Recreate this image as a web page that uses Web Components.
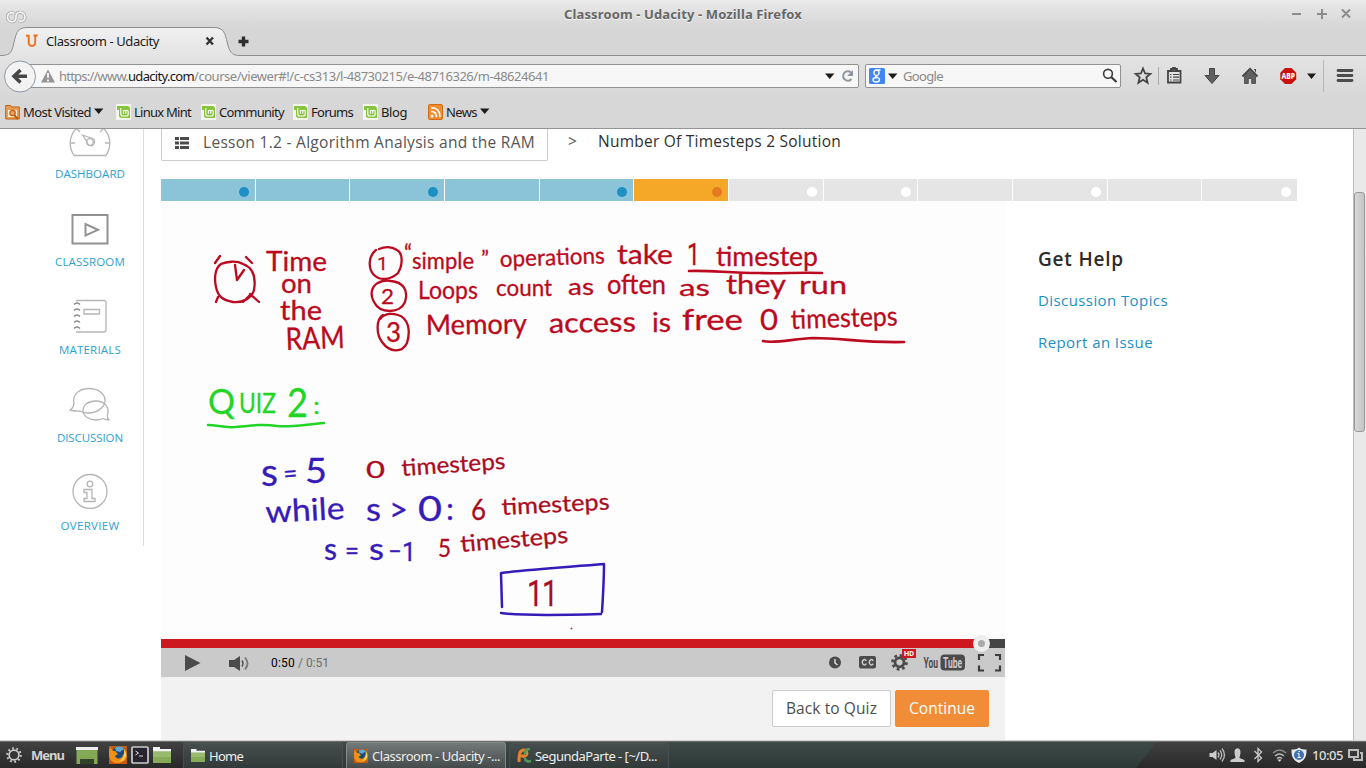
<!DOCTYPE html>
<html lang="en">
<head>
<meta charset="utf-8">
<title>Classroom - Udacity</title>
<style>
html,body{margin:0;height:100%;overflow:hidden}
body{font-family:"Noto Sans","Open Sans",sans-serif;font-size:13px;color:#1b1b1b}
</style>
</head>
<body>
<app-window></app-window>
<script>
const define = (name, css, html, setup) => {
  const t = document.createElement('template');
  t.innerHTML = `<style>*{box-sizing:border-box}${css}</style>${html}`;
  customElements.define(name, class extends HTMLElement {
    connectedCallback() {
      if (this.shadowRoot) return;
      this.attachShadow({mode: 'open'}).append(t.content.cloneNode(true));
      if (setup) setup(this, this.shadowRoot);
    }
  });
};

/* A label whose tracking is adjusted to fill a given width. */
define('fit-text', ':host{display:inline-block;white-space:pre;flex:none}', '<slot></slot>', host => {
  const w = parseFloat(host.getAttribute('w'));
  const n = host.textContent.length;
  const sp = (w - host.getBoundingClientRect().width) / n;
  host.style.letterSpacing = sp.toFixed(3) + 'px';
  host.style.width = w + 'px';
});

const down = '<svg width="10" height="7" viewBox="0 0 10 7"><path d="M0 .5h9.4L4.7 6z" fill="#1c1c1c"/></svg>';

define('window-title', `
:host{display:flex;height:27px;position:relative;justify-content:center;font-weight:700;font-size:13px;line-height:29px;color:#666;text-shadow:0 1px #f4f4f4}
.logo,.ctl{position:absolute;top:0}.logo{left:5px;top:10px}.ctl{right:13px;top:7px}`,
`<svg class="logo" width="22" height="14" viewBox="0 0 22 14" fill="none"><g id="k"><path d="M9 3.500C6 1.500 2.500 3.500 2.500 7s3 5.500 6 4.500S11 8.500 11 7s-.500-3.500 2.500-4.500S20 3.500 20 7s-3.500 5.500-6.500 3.500" stroke="#a2a2a2" stroke-width="3"/><path d="M9 3.500C6 1.500 2.500 3.500 2.500 7s3 5.500 6 4.500S11 8.500 11 7s-.500-3.500 2.500-4.500S20 3.500 20 7s-3.500 5.500-6.500 3.500" stroke="#f4f4f4" stroke-width="1.700"/></g></svg>
<fit-text w="238">Classroom - Udacity - Mozilla Firefox</fit-text>
<svg class="ctl" width="62" height="14" viewBox="0 0 62 14" stroke="#8c8c8c" stroke-width="2"><path d="M1 7h9M26 7h10M31 2v10M51 2.500l8 8M59 2.500l-8 8"/></svg>`);

define('browser-tabs', `
:host{display:flex;height:29px;position:relative;align-items:center}
.shape{position:absolute;inset:0}
.tab{position:relative;display:flex;align-items:center;padding-left:26px;width:227px;margin-top:-1px}
.tab svg:first-child{margin-right:8px}.x{margin-left:46px}.plus{position:relative;margin-left:11px}`,
`<svg class="shape" width="1366" height="30"><defs><linearGradient id="g" x2="0" y2="1"><stop stop-color="#f1f1f1"/><stop offset="1" stop-color="#e3e3e3"/></linearGradient></defs>
<path d="M0 28.500c9 0 11-2 13-9C16 8 16 .500 27 .500H214C226 .500 225 9 228.500 20c2 6.500 5 8.500 11.500 8.500H1366V30H0z" fill="url(#g)"/><path d="M0 28.500c9 0 11-2 13-9C16 8 16 .500 27 .500H214C226 .500 225 9 228.500 20c2 6.500 5 8.500 11.500 8.500H1366" fill="none" stroke="#8e8e8e"/></svg>
<div class="tab"><svg width="12" height="14" viewBox="0 0 12 14"><path d="M0 1.700h2.700V8c0 5.300 6.500 5.300 6.500 0V1.500M7.500 1.500h4.200" fill="none" stroke="#ef6f1e" stroke-width="1.900"/></svg><fit-text w="113">Classroom - Udacity</fit-text><svg class="x" width="10" height="10" viewBox="0 0 10 10"><path d="M1.500 1.500l6.500 7M8 1.500l-6.500 7" stroke="#333" stroke-width="2.300"/></svg></div>
<svg class="plus" width="11" height="11" viewBox="0 0 11 11"><path d="M5.500.500v10M.500 5.500h10" stroke="#2e2e2e" stroke-width="3.400"/></svg>`);

define('nav-bar', `
:host{display:flex;height:40px;align-items:center;background:linear-gradient(#e3e3e3,#d8d8d8);position:relative}
.url,.search{height:24px;border:1px solid #929292;border-radius:2px;background:#f7f7f7;display:flex;align-items:center}
.url{margin-left:20px;width:839px;padding-left:20px;color:#8a8a8a}
.url b{font-weight:400;color:#151515}.url .w{margin-right:4px}.url .d{margin:0 6px 0 auto}.url .r{margin-right:4px}.d{line-height:0}
.search{margin-left:6px;width:256px;padding-left:3px;color:#888}.search .d{margin:0 5px 0 3px}.search .m{margin:0 2px 0 auto}
.back{position:absolute;left:3px;top:4px}.tools{margin-left:8px}`,
`<div class="url"><svg class="w" width="14" height="14" viewBox="0 0 14 14"><path d="M7 .500L14 13.500H0z" fill="#959595"/><path d="M7 4v5M7 10.500v2" stroke="#fff" stroke-width="1.700"/></svg><fit-text w="69">https://www.</fit-text><b><fit-text w="66">udacity.com</fit-text></b><fit-text w="355">/course/viewer#!/c-cs313/l-48730215/e-48716326/m-48624641</fit-text><span class="d">${down}</span><svg class="r" width="13" height="14" viewBox="0 0 13 14"><path d="M10 3.500A4.700 4.700 0 1 0 10.500 10" fill="none" stroke="#8d969f" stroke-width="2"/><path d="M12 1v6H6z" fill="#8d969f"/></svg></div>
<div class="search"><svg width="16" height="16" viewBox="0 0 16 16"><rect width="16" height="16" rx="1.500" fill="#4285f4"/><path d="M11.500 2H8C4 2 4 7.500 7.500 7.500 11 7.500 10.700 2 7.500 2M7 7.500c-2 1.500 3.500 1.500 3.500 4 0 3.500-6.500 3-6.500.5C4 10 6 9.500 8 9.500" fill="none" stroke="#fff" stroke-width="1.400"/></svg><span class="d">${down}</span><fit-text w="40">Google</fit-text><svg class="m" width="16" height="16" viewBox="0 0 16 16" fill="none" stroke="#3d3d3d"><circle cx="6" cy="5.800" r="4.400" stroke-width="1.600"/><path d="M9.200 9l5.300 5" stroke-width="2.200"/></svg></div>
<svg class="tools" width="237" height="40" viewBox="1129 56 237 40"><g fill="none" stroke="#444" stroke-width="1.800"><path d="M1143 68.500l2.100 5 5.200.400-4 3.500 1.300 5.300-4.600-2.900-4.600 2.900 1.300-5.300-4-3.500 5.200-.400z"/><path d="M1168 71h12.500v11.500H1168z" fill="#e4e4e4"/><path d="M1170 74.500h1.500M1173 74.500h6M1170 77.200h1.500M1173 77.200h6M1170 80h1.500M1173 80h6" stroke-width="1.200"/><path d="M1171 71v-2h1.500l.5-1h2l.5 1h1.500v2" fill="#555"/></g>
<path d="M1158.500 67v18" stroke="#aaa"/><path d="M1209.500 68.500h5v7h4.500l-7 8-7-8h4.500z" fill="#606060" stroke="#444"/>
<path d="M1242.500 76.500l7.500-7.500 7.500 7.500" fill="none" stroke="#444" stroke-width="2"/><path d="M1244.500 76.500l5.500-5.300 5.500 5.300v7h-3.800v-5h-3.400v5h-3.800z" fill="#606060" stroke="#444" stroke-width=".800"/><path d="M1254 69h2v4z" fill="#444"/>
<path d="M1285 68h6.500l4.700 4.700v6.600l-4.700 4.700H1285l-4.700-4.700v-6.600z" fill="#c9110e"/><text x="1281.500" y="79.300" font-family="Noto Sans" font-size="8" font-weight="800" fill="#fff" textLength="13.500" lengthAdjust="spacingAndGlyphs">ABP</text>
<path d="M1307 73.500h9l-4.500 5.500z" fill="#1c1c1c"/><path d="M1323.500 60v32" stroke="#b0b7bd"/><path d="M1338 70.500h14M1338 75.500h14M1338 80.500h14" stroke="#4c4c4c" stroke-width="2.800" stroke-linecap="round"/></svg>
<svg class="back" width="34" height="34" viewBox="0 0 34 34"><circle cx="17" cy="16.500" r="15.500" fill="#f3f3f3" stroke="#8b97a3"/><path d="M17.500 10l-6.500 6.200 6.500 6.300M12 16.200h12" fill="none" stroke="#454545" stroke-width="3.500"/></svg>`);

const mint = '<svg class="i" width="15" height="16" viewBox="0 0 15 16"><path d="M0 0h15v16H0z" fill="#f3f5ee"/><path d="M1 2h10c2.500 0 3 1.500 3 3v9H6c-2.500 0-3-1-3-3V6H1z" fill="#86c43e"/><path d="M4.800 4V10q0 2 2 2h3.400q2 0 2-2V7.300q0-1-1.200-1t-1.200 1V9.800M9.800 7.300q0-1-1.200-1t-1.200 1V9.800" fill="none" stroke="#fff" stroke-width="1.100"/></svg>';
define('bookmark-item', ':host{display:flex;align-items:center;height:16px}', '<slot></slot>');
define('bookmark-bar', ':host{display:flex;height:33px;align-items:center;padding:0 0 1px 5px;background:#d7d7d7;border-bottom:1px solid #949494}.i{flex:none;margin-right:3px}.a{margin-left:3px;line-height:0}',
`<bookmark-item><svg class="i" width="15" height="16" viewBox="0 0 15 16"><path d="M.700 4V1.500h4.500L7 3h7.300v12H.700z" fill="#ed9b4f" stroke="#c3600f"/><rect x="3" y="6" width="9" height="7" fill="#fff0da"/><circle cx="7.500" cy="9" r="2.700" fill="#eaa765" stroke="#bd5a10" stroke-width="1.200"/><path d="M9 11l4 4" stroke="#bd5a10" stroke-width="2"/></svg><fit-text w="68">Most Visited</fit-text><span class="a">${down}</span></bookmark-item>
<bookmark-item style="margin-left:12px">${mint}<fit-text w="57">Linux Mint</fit-text></bookmark-item>
<bookmark-item style="margin-left:10px">${mint}<fit-text w="65">Community</fit-text></bookmark-item>
<bookmark-item style="margin-left:9px">${mint}<fit-text w="42">Forums</fit-text></bookmark-item>
<bookmark-item style="margin-left:10px">${mint}<fit-text w="26">Blog</fit-text></bookmark-item>
<bookmark-item style="margin-left:21px"><svg class="i" width="15" height="16" viewBox="0 0 15 16"><rect x=".500" y=".500" width="14" height="15" rx="1.500" fill="#ef8d30" stroke="#d06b10"/><circle cx="4" cy="12" r="1.500" fill="#fff"/><path d="M3 7.500c3.500 0 5.500 2 5.500 5.500M3 3.800c6 0 9 3.500 9 9.200" fill="none" stroke="#fff" stroke-width="1.500"/></svg><fit-text w="31">News</fit-text><span class="a">${down}</span></bookmark-item>`);

/* Left navigation */
define('side-item', ':host{display:flex;flex-direction:column;align-items:center;height:88px;color:#2e9fd0;font:11.500px "Open Sans",sans-serif;line-height:16px}::slotted(svg){display:block;margin-bottom:9px}', '<slot></slot>');
define('side-nav', ':host{display:block;width:144px;height:417px;border-right:1px solid #dcdcdc;padding:0 0 0 37px;overflow:hidden}.in{width:106px;margin-top:-8px}',
`<div class="in">
<side-item><svg width="42" height="36" viewBox="0 0 42 36" fill="none" stroke="#b5b5b5" stroke-width="1.300"><path d="M5 34.500C-3 22 2 3 21 3S45 22 37 34.500zM2 22h4M36 22h4M8 8l3 3M34 8l-3 3"/><path d="M13.500 14l10 3.500c4 2 1.500 8.500-3 7-2-1-2.500-2.500-2.500-3.500z"/><circle cx="21" cy="21" r="3.300"/></svg><fit-text w="70">DASHBOARD</fit-text></side-item>
<side-item><svg width="42" height="36" viewBox="0 0 42 36" fill="none" stroke="#919191" stroke-width="2"><path d="M3.500 6h35v28.500h-35zM16.500 15v11.500l12.500-5.700z"/></svg><fit-text w="70">CLASSROOM</fit-text></side-item>
<side-item><svg width="42" height="36" viewBox="0 0 42 36" fill="none" stroke="#b5b5b5" stroke-width="1.300"><path d="M7 3.500h28q2 0 2 2V33q0 2-2 2H7M15 12.500h15.500v4.500H15z"/><path d="M5 7.500q3-3 6 0M5 13.500q3-3 6 0M5 19.500q3-3 6 0M5 25.500q3-3 6 0M5 31.500q3-3 6 0" stroke="#888" stroke-width="1.600"/></svg><fit-text w="62">MATERIALS</fit-text></side-item>
<side-item><svg width="42" height="36" viewBox="0 -1 42 36" fill="none" stroke="#b5b5b5" stroke-width="1.300"><path d="M1 24c3-2 4-5 4-7C3 8 11 2.500 20 2.500s16 5 16 12-8 12.500-17 12.500c-3 0-6-.800-8-2-3 .500-6 0-10-1z"/><path d="M40.500 34c-2-1-2.500-3-2-6C41 21 35 15 27 15s-13 4-13 9.500S20 34 27 34c3 0 5-.500 7-1.500 2 1 4 1.500 6.500 1.500z"/></svg><fit-text w="66">DISCUSSION</fit-text></side-item>
<side-item><svg width="42" height="36" viewBox="0 -1 42 36" fill="none" stroke="#b5b5b5" stroke-width="1.300"><circle cx="21" cy="17.500" r="17"/><circle cx="21" cy="10" r="2.800"/><path d="M15 15.500h8v9h3v3H15v-3h3v-6h-3z"/></svg><fit-text w="59">OVERVIEW</fit-text></side-item></div>`);

define('lesson-head', `:host{display:flex;height:50px;font:15.500px "Open Sans",sans-serif;color:#555;align-items:flex-start}
.box{width:387px;height:32px;border:1px solid #ccc;border-top:0;border-radius:0 0 2px 2px;display:flex;padding:4px 0 0 13px;line-height:18px}.box svg{margin:4px 14px 0 0}.gt{margin:3px 0 0 20px;width:10px;line-height:18px}.cur{margin:3px 0 0 20px;color:#303030;line-height:18px}`,
`<div class="box"><svg width="14" height="12" fill="#4b4b4b"><path d="M0 0h4v3H0zM5 0h9v3H5zM0 4.500h4v3H0zM5 4.500h9v3H5zM0 9h4v3H0zM5 9h9v3H5z"/></svg><fit-text w="332">Lesson 1.2 - Algorithm Analysis and the RAM</fit-text></div><div class="gt">&gt;</div><div class="cur"><fit-text w="243">Number Of Timesteps 2 Solution</fit-text></div>`);

define('progress-strip', `:host{display:grid;grid-template-columns:repeat(12,1fr);width:1136px;height:22px}
i{background:#e5e5e5;border-right:1px solid #fff;display:flex;align-items:center;justify-content:flex-end;padding:3px 6px 0 0}
i.d{background:#8bc4d8}i.n{background:#f5a827}b{width:10px;height:10px;border-radius:50%;background:#fff}.d b{background:#1d8fc5}.n b{background:#e57a22}i:last-child{border:0}`,
`<i class="d"><b></b></i><i class="d"></i><i class="d"><b></b></i><i class="d"></i><i class="d"><b></b></i><i class="n"><b></b></i><i><b></b></i><i><b></b></i><i></i><i><b></b></i><i></i><i><b></b></i>`);

/* Lecture board: words on a free canvas as [text, x, baseline, width, size, rotation] */
const red = [['Time',266,271,61,27,0],['on',281,293,31,26,0],['the',280,320,42,27,0],['RAM',286,350,59,31,-2],
['1',377,270,11,19,0],['2',381,304,13,22,0],['3',386,342,15,26,0],['“',404,261,8,24,0],['simple',412,269,62,24,0],['”',481,266,8,22,0],
['operations',500,267,105,23,-2],['take',617,264,56,26,0],['1',687,265,13,32,0],['timestep',716,266,102,26,0],
['Loops',418,299,60,25,0],['count',496,296,56,24,0],['as',568,295,26,23,0],['often',607,294,59,26,0],['as',679,296,31,24,0],['they',726,294,60,26,0],['run',799,294,48,25,0],
['Memory',426,335,101,28,-1],['access',549,333,87,28,-1],['is',652,332,19,26,0],['free',682,330,61,29,0],['0',760,330,18,28,0],['timesteps',791,329,107,27,-2]];
const dark = [['0',366,478,19,23,0],['timesteps',402,476,104,23,-4],['6',471,520,15,28,0],['timesteps',502,515,108,23,-3],['5',438,557,13,25,0],['timesteps',461,552,108,23,-5],['1',527,606,16,37,0],['1',542,606,16,37,0]];
const blue = [['s',261,486,17,38,0],['=',284,483,14,26,-4],['5',305,483,22,34,0],['while',266,523,79,31,-3],['s',366,521,15,33,0],['>',389,521,19,32,0],['0',418,521,24,35,0],[':',446,520,8,31,0],['s',324,560,13,30,0],['=',345,560,14,27,0],['s',369,560,15,30,0],['–',388,559,14,25,0],['1',402,561,14,26,0]];
const green = [['Q',208,414,27,35,0],['UIZ',239,413,37,27,0],['2',287,417,21,40,0],[':',313,414,7,24,0]];
const ink = (list, c) => `<g fill="${c}" stroke="${c}" stroke-width=".300">` + list.map(([t,x,y,w,s,r]) => `<text x="${x}" y="${y}" font-size="${s}" textLength="${w}" lengthAdjust="spacingAndGlyphs" transform="rotate(${r} ${x} ${y})"${t === '1' ? ' font-family="Roboto"' : ''}>${t}</text>`).join('') + '</g>';
define('lecture-board', ':host{display:block;width:844px;height:438px;background:#fdfdfd}svg{display:block;font-family:Lato,"Open Sans",sans-serif}',
`<svg width="844" height="438" viewBox="161 201 844 438" stroke-linecap="round" stroke-linejoin="round">
${ink(red,'#bb0a20')}${ink(dark,'#aa0c22')}${ink(blue,'#371bb8')}${ink(green,'#21d526')}
<g fill="none" stroke="#bb0a20" stroke-width="2.300"><path d="M221 264c-6 4-7 14-5 23 2 10 7 13 17 15 10 1 19-4 21-12 2-12 0-22-11-26-7-4-17-2-22 0M235 265l2 15 7-10M215 263l5-7M246 257l6 6M218 297l-2 5M243 302l8-8M250 294l9 8"/>
<path d="M376 250c-8 6-8 19-2 25 6 6 17 5 24-2 5-8 5-20-1-23-6-4-13-3-18-1M382 281c-10 3-13 12-8 21 6 12 26 12 31 0 4-13-3-20-14-21-5-1-9 0-13 2M383 315c-7 4-7 19-1 27 8 11 20 11 25 1 4-13 1-25-9-28-7-2-14-1-18 4"/>
<path d="M689 271c20-1 40 2 70 2 20 1 40-1 63 0M763 341c10 3 30-2 50-3 30 0 50 5 91 4" stroke-width="2.600"/></g>
<path d="M208 425c10 0 14 3 27 2 20-2 30-3 42-1 15 1 24-1 47-3" fill="none" stroke="#21d526" stroke-width="2.500"/>
<path d="M502 607l-1-34c30-4 68-6 103-9 0 16-1 32-2 48M501 613c20 3 65 2 100 1" fill="none" stroke="#371bb8" stroke-width="2.500"/><circle cx="571.500" cy="628.500" r="1" fill="#9a4050"/></svg>`);

define('video-player', `:host{display:flex;flex-direction:column;width:844px;height:540px;background:#f2f2f2}
.seek{height:9px;background:linear-gradient(90deg,#cc181e 820px,#444 820px);position:relative}.knob{position:absolute;left:812px;top:-4px;width:17px;height:17px;border-radius:50%;background:#eee;display:flex;align-items:center;justify-content:center}.knob i{width:7px;height:7px;border-radius:50%;background:#aaa}
.bar{height:29px;background:#cacaca;display:flex;align-items:center;padding-left:24px;font:12px Roboto,sans-serif;color:#6d6d6d}
.bar b{font-weight:400;color:#000}.vol{margin:0 21px 0 28px}.right{margin-left:auto}
.act{display:flex;justify-content:flex-end;padding:13px 16px 0;gap:4px;font:15.500px/35px "Open Sans",sans-serif}
.btn{height:37px;border:1px solid #ccc;border-radius:2px;background:#fff;color:#4e4e4e;padding:0 13px}.go{background:#f18d36;border-color:#f18d36;color:#fff}`,
`<lecture-board></lecture-board><div class="seek"><div class="knob"><i></i></div></div>
<div class="bar"><svg width="16" height="16" viewBox="0 0 16 16"><path d="M0 0l15.500 8L0 16z" fill="#4b4b4b"/></svg>
<svg class="vol" width="21" height="16" viewBox="0 0 21 16"><path d="M0 5h5l6-4v15l-6-4H0z" fill="#4b4b4b"/><path d="M13 5.500q2 3 0 6" fill="none" stroke="#555" stroke-width="1.500"/><path d="M16 2.500q5 6 0 12" fill="none" stroke="#777" stroke-width="1.800"/></svg>
<b><fit-text w="24">0:50</fit-text></b><fit-text w="34"> / 0:51</fit-text>
<svg class="right" width="185" height="29" viewBox="820 648 185 29"><circle cx="835" cy="662.500" r="6" fill="#4b4b4b"/><path d="M835 659v4l2.500 2" stroke="#ddd" stroke-width="1.500" fill="none"/>
<rect x="859" y="656" width="17" height="12.500" rx="2" fill="#4b4b4b"/><path d="M866.300 660.800c-1.500-2.200-4-1.200-4 1.500s2.500 3.500 4 1.300M873.300 660.800c-1.500-2.200-4-1.200-4 1.500s2.500 3.500 4 1.300" fill="none" stroke="#ccc" stroke-width="1.500"/>
<circle cx="899.500" cy="662.300" r="4.500" fill="none" stroke="#4b4b4b" stroke-width="2.800"/><circle cx="899.500" cy="662.300" r="7" fill="none" stroke="#4b4b4b" stroke-width="2.700" stroke-dasharray="2.750 2.750"/>
<rect x="902" y="649" width="14" height="9" fill="#cc181e"/><text x="904" y="656.300" font-size="7" font-weight="700" fill="#fff" textLength="10" lengthAdjust="spacingAndGlyphs">HD</text>
<rect x="940.500" y="654.500" width="24.500" height="16" rx="4" fill="#4b4b4b"/><g font-family="Roboto" font-weight="700" font-size="8.500"><text transform="translate(923.500 668) scale(1 1.750)" fill="#4b4b4b">You</text><text transform="translate(943 668) scale(1 1.750)" fill="#ccc">Tube</text></g>
<path d="M979 660v-5h5M995 655h5v5M1000 665.500v5h-5M984 670.500h-5v-5" fill="none" stroke="#3d3d3d" stroke-width="2.200"/></svg></div>
<div class="act"><div class="btn"><fit-text w="91">Back to Quiz</fit-text></div><div class="btn go"><fit-text w="66">Continue</fit-text></div></div>`);

define('help-panel', `:host{display:flex;flex-direction:column;align-items:flex-start;padding:46px 0 0 33px;font:15px/20px "Open Sans",sans-serif;color:#1c8fc4;gap:22px}h2{margin:0 0 -3px;font-size:19px;line-height:24px;font-weight:600;color:#2b2b2b}`,
`<h2><fit-text w="86">Get Help</fit-text></h2><fit-text w="130">Discussion Topics</fit-text><fit-text w="115">Report an Issue</fit-text>`);

define('class-page', `:host{display:flex;height:612px;background:#fff;overflow:hidden;border-bottom:1px solid #cfcfcf}
.main{margin-left:17px;width:1192px}.row{display:flex}
.sb{width:13px;background:#e9e9e9;border-left:1px solid #bcbcbc;padding:63px 1px 0 0}.th{height:240px;border:1px solid #999;border-radius:3px;background:linear-gradient(90deg,#d8d8d8,#c4c4c4)}`,
`<side-nav></side-nav><div class="main"><lesson-head></lesson-head><progress-strip></progress-strip><div class="row"><video-player></video-player><help-panel></help-panel></div></div><div class="sb"><div class="th"></div></div>`);

const folder = (w,h) => `<svg width="${w}" height="${h}" viewBox="0 0 18 16" preserveAspectRatio="none"><path d="M0 0h7v2h11v4H0z" fill="#f2f2f2"/><path d="M0 4.500h18V16H0z" fill="#86ac58"/><path d="M0 4.500h18V10H0z" fill="#9dbf75" opacity=".800"/></svg>`;
const fox = s => `<svg width="${s}" height="${s}" viewBox="0 0 18 18"><path d="M0 0h18v18H0z" fill="#c75a10"/><circle cx="10" cy="8" r="7.500" fill="#174a7d"/><path d="M6 2c3-2 7-2 9 1l-4 3-4-1z" fill="#5fa9cf"/><path d="M1 1l3 4c3-1 3 2 5 3l-3 2c2 4 7 3 8-1 2-3 1-5 0-7 6 4 5 14-4 15S-2 11 1 1z" fill="#f28f15"/><path d="M15 3c4 5 2 12-5 13 4-3 6-7 5-13z" fill="#fcd24c"/></svg>`;
define('task-button', ':host{display:flex;align-items:center;width:160px;height:26px;margin-right:3px;padding:0 0 0 7px;gap:4px;border-radius:3px 3px 0 0;background:linear-gradient(#474e4e,#323a39);color:#eee;border:1px solid #4a5050;border-bottom:0}:host([on]){background:linear-gradient(#737878,#454b4b);border-color:#838989}', '<slot></slot>');
define('task-bar', `:host{display:flex;height:27px;align-items:center;position:relative;background:linear-gradient(#414141,#292929);border-top:1px solid #707070;color:#ddd;padding-left:6px}
.bg{position:absolute;left:183px;top:0}.l,.r{display:flex;align-items:center;position:relative}.l{width:177px}.tasks{display:flex;position:relative}.m{font-weight:700;margin:0 12px 0 9px;color:#d2d2d2}.r{margin-left:auto}`,
`<svg class="bg" width="975" height="26"><defs><linearGradient id="t" x2="0" y2="1"><stop stop-color="#3e4a47"/><stop offset="1" stop-color="#2d3936"/></linearGradient></defs><path d="M0 0h973L953 26H0z" fill="url(#t)"/></svg>
<div class="l"><svg width="16" height="16" viewBox="0 0 16 16" fill="none" stroke="#ccc"><circle cx="8" cy="8" r="4.900" stroke-width="1.700"/><circle cx="8" cy="8" r="6.800" stroke-width="2" stroke-dasharray="1.800 2.472"/></svg><span class="m"><fit-text w="33">Menu</fit-text></span>
<svg width="22" height="17" viewBox="0 0 22 17"><path d="M0 0h22v3H0z" fill="#eee"/><path d="M.500 3h21v14h-21z" fill="#83a956"/><path d="M4 12h14v5H4z" fill="#35422a"/></svg><span style="width:11px"></span>${fox(18)}<span style="width:4px"></span>
<svg width="18" height="18" viewBox="0 0 18 18"><rect x="1" y="1" width="16" height="16" rx="1" fill="#26232e" stroke="#ccc" stroke-width="1.700"/><path d="M4.500 5l3 2-3 2M8 10h4" fill="none" stroke="#ddd"/></svg><span style="width:4px"></span>${folder(18,16)}</div>
<div class="tasks"><task-button>${folder(14,13)}<fit-text w="34">Home</fit-text></task-button><task-button on>${fox(14)}<fit-text w="128">Classroom - Udacity -...</fit-text></task-button><task-button><svg width="14" height="15" viewBox="0 0 14 15" fill="none" stroke-width="3"><path d="M2 14c0-9 1-12 5-12 3 0 4 5 1 6S4 7 4 7" stroke="#e7812f"/><path d="M13 1c-5 0-5 3-5 6M8 10c0 3 3 4 6 3" stroke="#4f9b54" stroke-width="2.500"/></svg><fit-text w="122">SegundaParte - [~/D...</fit-text></task-button></div>
<svg class="r" width="101" height="26" viewBox="1206.500 742 101 26"><g fill="#ccc"><path d="M1210 753h3l4-3v10l-4-3h-3z"/><path d="M1235 752c0-5 6-5 6 0 0 3-1 4-1 6l5 2v2h-14v-2l5-2c0-2-1-3-1-6z"/></g><path d="M1218.500 752.500q2 2.500 0 5M1220.500 750.500q3.500 4.500 0 9M1222.500 748.500q5 6.500 0 13" fill="none" stroke="#bbb" stroke-width="1.300"/><path d="M1255 751l7 7-3.500 3.500v-13l3.500 3.500-7 7" fill="none" stroke="#ccc" stroke-width="1.300"/><g fill="none" stroke="#bbb" stroke-width="1.500"><path d="M1273.500 753q6.500-6 13 0" stroke="#888"/><path d="M1275.500 756q4.500-4 9 0M1277.500 758.500q2.500-2 5 0"/></g><path d="M1278 759.500h4l-2 2.500z" fill="#ddd"/><path d="M1299.500 747.500c2 2 5 2 7.500 2 0 7-1 10-7.500 13.500-6.500-3.500-7.500-6.500-7.500-13.500 2.500 0 5.500 0 7.500-2z" fill="#e5e8ed"/><circle cx="1299.500" cy="755" r="5" fill="#3d70b5"/><path d="M1298 753.500h1.500v4M1298 757.500h3.500M1299 751.500h1.500" stroke="#fff" fill="none"/></svg>
<fit-text w="31" style="position:relative;margin:0 5px;font-weight:500;color:#ddd">10:05</fit-text><svg width="17" height="14" viewBox="0 0 17 14" style="margin-right:1px" fill="none" stroke="#bbb" stroke-width="2"><path d="M1 2h9v7H1zM12 5h2v7H6v-3"/></svg>`);

define('app-window', ':host{display:grid;grid-template-rows:27px 29px 40px 33px 612px 27px;width:1366px;height:768px;background:linear-gradient(#e9e9e9,#d6d6d6 27px)}',
'<window-title></window-title><browser-tabs></browser-tabs><nav-bar></nav-bar><bookmark-bar></bookmark-bar><class-page></class-page><task-bar></task-bar>');
</script>
</body>
</html>
